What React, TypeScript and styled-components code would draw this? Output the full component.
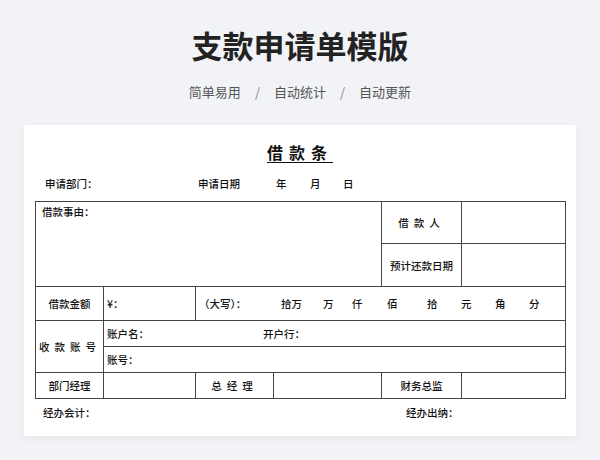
import styled, { createGlobalStyle } from "styled-components";

const Global = createGlobalStyle`
  body { margin: 0; background: #f1f3f6; font-family: "Noto Sans CJK SC", "Noto Sans", sans-serif; }
`;

const Page = styled.div`
  width: 600px;
  height: 460px;
  display: flex;
  flex-direction: column;
  align-items: center;
  overflow: hidden;
`;

const Title = styled.h1`
  margin: 24px 0 0;
  font-size: 31px;
  line-height: 42px;
  font-weight: 700;
  color: #222;
`;

const Tags = styled.div`
  margin-top: 17px;
  display: flex;
  gap: 14px;
  font-size: 13px;
  line-height: 18px;
  color: #555;
`;

const Sep = styled.span`
  color: #888;
`;

const Card = styled.div`
  margin-top: 24px;
  width: 552px;
  height: 311px;
  background: #fff;
  box-shadow: 0 2px 8px rgba(0, 0, 0, 0.06);
  box-sizing: border-box;
  padding: 16px 11px 0;
  color: #111;
  font-size: 10.5px;
  font-weight: 500;
`;

const DocTitle = styled.div`
  text-align: center;
  font-size: 16px;
  font-weight: 700;
  letter-spacing: 6px;
  line-height: 22px;
  text-decoration: underline;
  text-underline-offset: 3px;
`;

const InfoRow = styled.div`
  display: flex;
  align-items: center;
  height: 20px;
  margin-top: 10px;
  padding-left: 10px;
  margin-bottom: 8px;
`;

const Field = styled.span<{ $w: number }>`
  width: ${(p) => p.$w}px;
  flex: none;
`;

const Table = styled.table`
  border-collapse: collapse;
  width: 530px;
  table-layout: fixed;
  border: 1.5px solid #333;
`;

const Cell = styled.td<{ $h?: number; $align?: string; $top?: boolean }>`
  border: 1px solid #444;
  height: ${(p) => p.$h ?? 25}px;
  padding: ${(p) => (p.$top ? "2px 6px" : "0 3px")};
  text-align: ${(p) => p.$align ?? "center"};
  vertical-align: ${(p) => (p.$top ? "top" : "middle")};
  white-space: nowrap;
`;

const Spaced = styled.span`
  letter-spacing: 5px;
`;

const Units = styled.div`
  display: flex;
  align-items: center;
`;

const Footer = styled.div`
  display: flex;
  padding-left: 8px;
  margin-top: 6px;
  line-height: 16px;
`;

const units = ["拾万", "万", "仟", "佰", "拾", "元", "角", "分"];
const unitW = [42, 29, 35, 40, 34, 34, 34, 20];

export default function App() {
  return (
    <Page>
      <Global />
      <Title>支款申请单模版</Title>
      <Tags>
        <span>简单易用</span>
        <Sep>/</Sep>
        <span>自动统计</span>
        <Sep>/</Sep>
        <span>自动更新</span>
      </Tags>
      <Card>
        <DocTitle>借款条</DocTitle>
        <InfoRow>
          <Field $w={153}>申请部门：</Field>
          <Field $w={78}>申请日期</Field>
          <Field $w={34}>年</Field>
          <Field $w={33}>月</Field>
          <Field $w={20}>日</Field>
        </InfoRow>
        <Table>
          <colgroup>
            <col style={{ width: 68 }} />
            <col style={{ width: 92 }} />
            <col style={{ width: 78 }} />
            <col style={{ width: 108 }} />
            <col style={{ width: 80 }} />
            <col style={{ width: 104 }} />
          </colgroup>
          <tbody>
            <tr>
              <Cell colSpan={4} rowSpan={2} $top $align="left">借款事由：</Cell>
              <Cell $h={41}><Spaced>借款人</Spaced></Cell>
              <Cell $h={41} />
            </tr>
            <tr>
              <Cell $h={42}>预计还款日期</Cell>
              <Cell $h={42} />
            </tr>
            <tr>
              <Cell $h={33}>借款金额</Cell>
              <Cell $h={33} $align="left">¥：</Cell>
              <Cell $h={33} colSpan={4} $align="left">
                <Units>
                  <Field $w={82}>（大写）：</Field>
                  {units.map((u, i) => (
                    <Field key={u + i} $w={unitW[i]}>{u}</Field>
                  ))}
                </Units>
              </Cell>
            </tr>
            <tr>
              <Cell rowSpan={2}><Spaced>收款账号</Spaced></Cell>
              <Cell colSpan={5} $align="left">
                <Units>
                  <Field $w={156}>账户名：</Field>
                  <span>开户行：</span>
                </Units>
              </Cell>
            </tr>
            <tr>
              <Cell colSpan={5} $align="left">账号：</Cell>
            </tr>
            <tr>
              <Cell>部门经理</Cell>
              <Cell />
              <Cell><Spaced>总经理</Spaced></Cell>
              <Cell />
              <Cell>财务总监</Cell>
              <Cell />
            </tr>
          </tbody>
        </Table>
        <Footer>
          <Field $w={363}>经办会计：</Field>
          <span>经办出纳：</span>
        </Footer>
      </Card>
    </Page>
  );
}
